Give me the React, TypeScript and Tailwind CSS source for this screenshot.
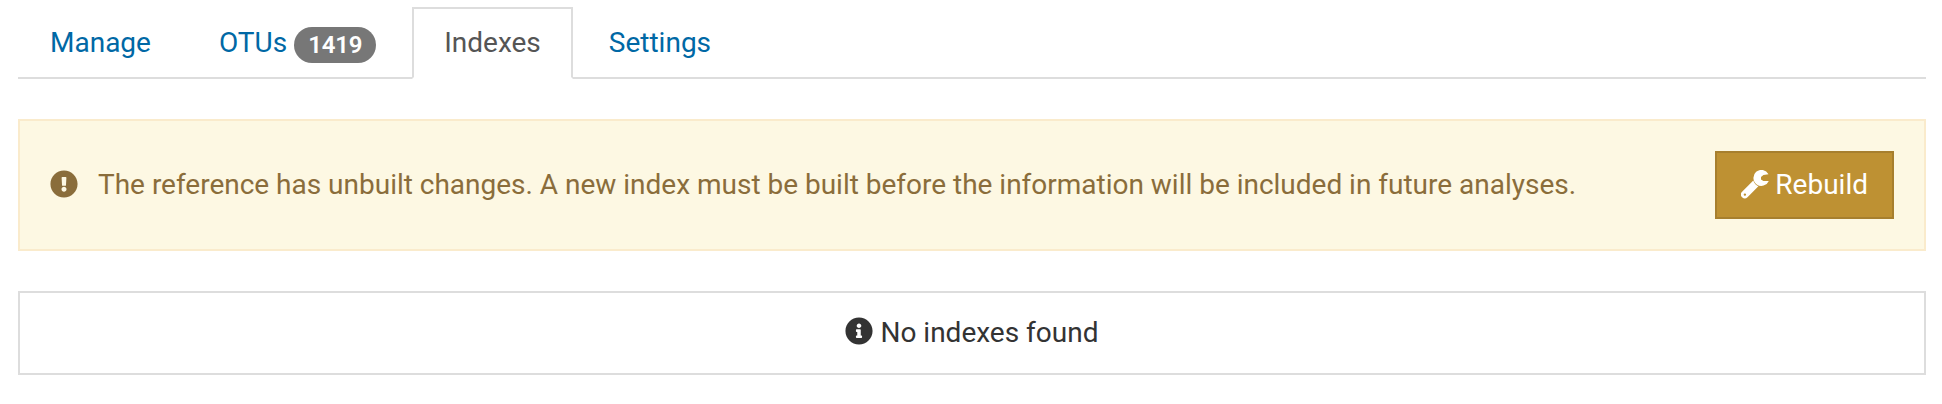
import { FaExclamationCircle, FaInfoCircle } from "react-icons/fa";

const link = "mr-1 border-2 border-transparent px-[30px] pt-[14px] pb-[14px] text-[#0068a5]";

function Wrench({ className }: { className: string }) {
  return (
    <svg className={className} viewBox="0 0 28 29" fill="currentColor">
      <path d="M27.5 4.2 L22.4 5 L20 7 V9.4 L22.4 11 L27.8 11 A8 8 0 1 1 27.5 4.2Z" />
      <path
        fillRule="evenodd"
        d="M12.3 10.6 A8.7 8.7 0 0 0 17.4 16.2 L6.5 27.2 A3.8 3.8 0 0 1 1.1 21.8Z M3.9 23.4 A1.2 1.2 0 1 0 3.9 25.8 A1.2 1.2 0 1 0 3.9 23.4Z"
      />
    </svg>
  );
}

export default function App() {
  return (
    <div className="h-[404px] bg-white pt-[7px] pr-4 pl-[18px] font-['Roboto',sans-serif] text-[28px] leading-[40px] text-[#333]">
      <nav className="flex h-[72px] border-b-2 border-[#ddd]">
        <a className={link}>Manage</a>
        <a className={link}>
          OTUs{" "}
          <span className="inline-block rounded-[20px] bg-[#777] px-[14px] py-[6px] align-middle text-[24px] leading-[24px] font-semibold tracking-[-0.2px] text-white">
            1419
          </span>
        </a>
        <a className="mr-1 h-[72px] border-2 border-[#ddd] border-b-white bg-white px-[30px] py-[14px] text-[#555]">
          Indexes
        </a>
        <a className={link}>Settings</a>
      </nav>

      <div className="mt-10 flex h-[132px] items-center border-2 border-[#faebcc] bg-[#fdf8e3] px-[30px] text-[#8a6d3b]">
        <FaExclamationCircle className="mb-[2px] size-7 shrink-0" />
        <span className="ml-5 grow tracking-[-0.01px]">
          The reference has unbuilt changes. A new index must be built before the information will be included in future analyses.
        </span>
        <button className="flex h-[68px] w-[179px] items-center justify-between border-2 border-[#a77f2e] bg-[#be9133] px-6 text-white">
          <Wrench className="mb-px h-[29px] w-7" />
          <span>Rebuild</span>
        </button>
      </div>

      <div className="mt-10 flex h-[84px] items-center justify-center border-2 border-[#ddd] whitespace-pre">
        <FaInfoCircle className="mr-[0.5px] mb-[4px] -ml-[0.5px] size-7" />
        <span> No indexes found</span>
      </div>
    </div>
  );
}
